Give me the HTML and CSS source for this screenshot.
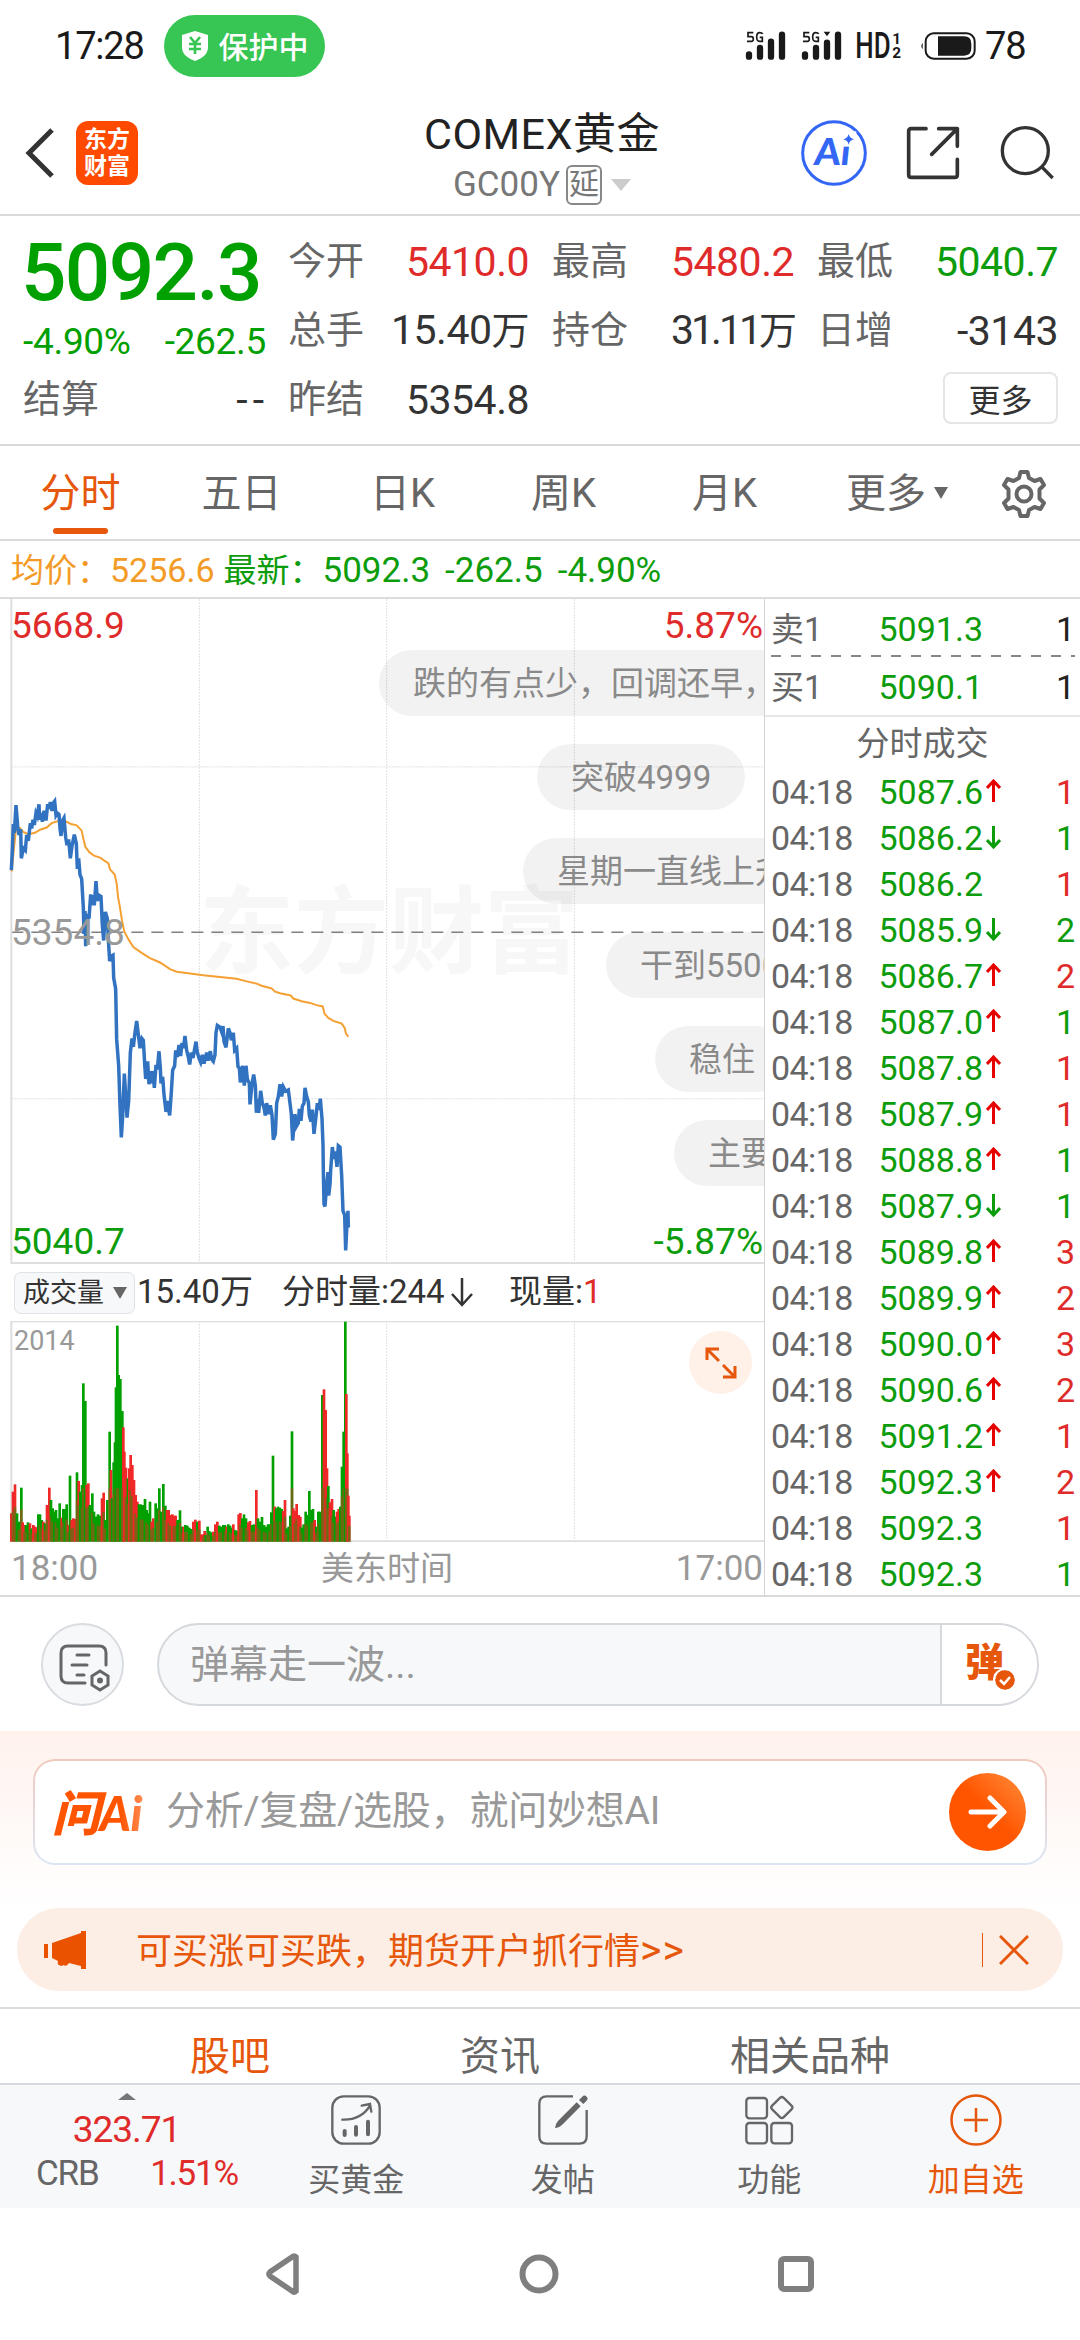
FILE: index.html
```html
<!DOCTYPE html>
<html lang="zh-CN">
<head>
  <meta charset="utf-8">
  <title>COMEX黄金</title>
  <link rel="stylesheet" href="styles.css">
</head>
<body>
  <div class="status-bar">
    <span class="clock">17:28</span>
    <span class="guard">
      <svg width="28" height="32" viewBox="0 0 28 32"><path d="M14 1l13 4v12c0 7-5 11-13 14C6 28 1 24 1 17V5z" fill="#fff"/><path d="M9 7l5 6 5-6M8 14h12M8 19h12M14 13v11" fill="none" stroke="#37c553" stroke-width="2.6"/></svg>
      <span>保护中</span>
    </span>
    <svg class="signals" width="160" height="32" viewBox="0 0 480 96">
      <g fill="none" stroke="#1a1a1a" stroke-width="19" stroke-linecap="round">
        <path d="M15 73v7M48 54v26M81 35v45M114 14v66M183 73v7M216 54v26M249 38v42M282 14v66"/>
      </g>
      <path d="M239 5h20l-10 14z" fill="#1a1a1a"/>
      <g fill="none" stroke="#1a1a1a" stroke-width="5">
        <path d="M28 8H12v12h10q6 0 6 7t-6 7H9M56 12q-2-4-9-4-9 0-9 13t9 13h8V22h-8"/>
        <path d="M196 8h-16v12h10q6 0 6 7t-6 7h-13M224 12q-2-4-9-4-9 0-9 13t9 13h8V22h-8"/>
      </g>
      <text class="hd" x="334" y="85" textLength="106" lengthAdjust="spacingAndGlyphs">HD</text>
      <text class="sub" x="445" y="42">1</text>
      <text class="sub" x="445" y="85">2</text>
    </svg>
    <svg class="battery" width="56" height="28" viewBox="0 0 168 84"><rect x="17" y="4" width="147" height="76" rx="24" fill="none" stroke="#1a1a1a" stroke-width="6"/><path d="M54 13h78q22 0 22 22v14q0 22-22 22H54zM8 32v20q-8-10 0-20z" fill="#1a1a1a"/></svg>
    <span class="percent">78</span>
  </div>

  <div class="header">
    <svg class="back" width="30" height="52" viewBox="0 0 30 52"><path d="M28 3L5 26l23 23" fill="none" stroke="#333" stroke-width="5"/></svg>
    <div class="logo"><span>东方</span><span>财富</span></div>
    <div class="title">
      <h1>COMEX黄金</h1>
      <p>GC00Y<span class="delay">延</span><i class="tri"></i></p>
    </div>
    <div class="actions">
      <svg width="66" height="66" viewBox="0 0 198 198">
        <circle cx="99" cy="99" r="94" fill="none" stroke="#3366f5" stroke-width="9"/>
        <text class="ai" x="38" y="136" transform="skewX(-6) translate(13 0)">Ai</text>
        <path d="M120 34h46v46h-46z" fill="#fff"/>
        <path d="M143 42q3 13 16 16-13 3-16 16-3-13-16-16 13-3 16-16z" fill="#3366f5"/>
      </svg>
      <svg width="54" height="54" viewBox="0 0 162 162"><g fill="none" stroke="#333" stroke-width="11" stroke-linecap="round" stroke-linejoin="round"><path d="M60 8H16q-8 0-8 8v130q0 8 8 8h130q8 0 8-8v-46M98 8h56v53M154 8L77 85"/></g></svg>
      <svg width="54" height="54" viewBox="0 0 162 162"><circle cx="76" cy="74" r="69" fill="none" stroke="#333" stroke-width="10"/><path d="M124 121l34 35" stroke="#333" stroke-width="10"/></svg>
    </div>
  </div>

  <div class="quote">
    <div class="price">
      <b>5092.3</b>
      <div class="change"><span>-4.90%</span><span>-262.5</span></div>
      <div class="cell"><label>结算</label><span class="empty">--</span></div>
    </div>
    <div class="cells">
      <div class="cell"><label>今开</label><span class="red">5410.0</span></div>
      <div class="cell"><label>最高</label><span class="red">5480.2</span></div>
      <div class="cell"><label>最低</label><span class="green">5040.7</span></div>
      <div class="cell"><label>总手</label><span>15.40<small>万</small></span></div>
      <div class="cell"><label>持仓</label><span class="tight">31.11<small>万</small></span></div>
      <div class="cell"><label>日增</label><span>-3143</span></div>
      <div class="cell"><label>昨结</label><span>5354.8</span></div>
      <div></div>
      <div class="cell"><button class="more">更多</button></div>
    </div>
  </div>

  <div class="tabs">
    <span class="active">分时</span>
    <span>五日</span>
    <span>日K</span>
    <span>周K</span>
    <span>月K</span>
    <span class="tab-more">更多<i class="tri"></i></span>
    <svg width="48" height="50" viewBox="0 0 48 50"><path d="M20.500 3h7l1.500 6 5.500 3 6-2 3.500 6-4.500 4.500v9L44 34l-3.500 6-6-2-5.500 3-1.500 6h-7L19 41l-5.500-3-6 2L4 34l4.500-4.500v-9L4 16l3.500-6 6 2L19 9z" fill="none" stroke="#666" stroke-width="4" stroke-linejoin="round"/><circle cx="24" cy="25" r="7.500" fill="none" stroke="#666" stroke-width="4"/></svg>
  </div>

  <div class="info">
    <span class="avg">均价：<em>5256.6</em></span>
    <span class="last">最新：<em>5092.3</em><em>-262.5</em><em>-4.90%</em></span>
  </div>

  <div class="market">
    <div class="charts">
      <div class="price-box">
        <div class="watermark">东方财富</div>
        <svg class="plot" viewBox="0 18 2292 1513" preserveAspectRatio="none">
          <path class="grid" d="M598 18V1531M1160 18V1531M1723 18V1531M34 400H2292M34 1155H2292"/>
          <path class="base" d="M34 776H2292"/>
          <path class="frame" d="M34 18V1529H2292"/>
          <polyline class="avg-line" points="35,638 40,600 48,540 58,538 70,548 85,553 105,550 120,543 140,538 155,528 175,523 200,525 213,530 230,533 245,545 250,563 256,582 268,594 282,602 302,607 314,614 325,619 330,633 344,645 350,665 354,695 360,720 366,750 373,775 386,793 400,810 425,823 450,835 480,845 510,860 530,866 570,870 610,874 660,878 710,882 740,888 770,893 785,898 815,904 824,911 840,915 872,920 880,927 905,933 930,937 950,942 968,945 974,962 985,971 1000,978 1025,984 1034,994 1038,1007 1045,1014"/>
          <polyline class="price-line" points="34,635 37,590 40,530 43,550 48,487 50,505 53,535 57,555 62,542 64,608 70,585 76,590 80,555 85,568 91,528 95,540 99,520 103,532 108,505 112,512 117,485 119,520 124,505 127,525 132,500 138,522 143,485 147,495 151,480 156,500 160,482 164,478 168,510 172,505 177,508 180,540 183,557 189,520 192,516 197,560 201,578 206,565 211,608 216,580 223,554 229,575 232,632 236,608 240,645 245,655 250,720 252,780 255,728 257,808 262,735 267,745 272,690 276,715 280,692 283,715 288,660 292,705 297,692 303,695 307,760 311,795 316,730 322,745 326,805 329,842 334,830 339,828 341,880 347,905 350,1020 356,1080 360,1170 364,1243 368,1195 373,1098 378,1160 381,1198 386,1160 391,1050 396,1018 400,1037 405,1005 410,978 416,1015 420,1040 426,1018 430,1022 434,1075 437,1110 443,1070 447,1122 452,1092 455,1120 459,1092 463,1130 468,1078 472,1088 477,1047 481,1085 483,1120 488,1105 492,1145 498,1185 502,1160 509,1193 514,1140 518,1090 524,1080 527,1045 532,1060 537,1033 542,1058 546,1028 550,1040 555,1012 560,1045 565,1060 569,1077 574,1050 579,1062 588,1025 592,1050 598,1065 602,1072 607,1055 612,1075 620,1050 624,1068 631,1047 635,1065 640,1070 645,1055 648,1005 652,988 660,992 665,1003 669,990 672,1025 678,1038 685,995 690,1005 694,1022 700,1005 704,1045 710,1040 714,1082 718,1085 721,1118 728,1080 733,1125 738,1080 742,1110 748,1120 750,1168 756,1122 761,1100 766,1125 769,1187 774,1155 776,1187 782,1137 787,1165 792,1175 796,1193 800,1165 807,1190 811,1170 816,1192 820,1248 826,1235 830,1165 835,1150 840,1122 845,1150 850,1128 857,1138 865,1135 870,1165 874,1190 878,1250 885,1190 889,1218 895,1210 898,1178 903,1205 907,1172 912,1165 915,1130 920,1150 925,1162 928,1193 933,1207 937,1180 942,1235 948,1195 952,1165 957,1180 961,1155 966,1200 969,1260 970,1320 972,1395 975,1400 980,1350 984,1322 986,1375 990,1350 992,1318 997,1265 1002,1292 1006,1275 1011,1310 1015,1262 1020,1265 1025,1330 1029,1410 1034,1420 1037,1500 1041,1440 1044,1410 1045,1448"/>
        </svg>
        <span class="mark top-left red">5668.9</span>
        <span class="mark top-right red">5.87%</span>
        <span class="mark middle">5354.8</span>
        <span class="mark bottom-left green">5040.7</span>
        <span class="mark bottom-right green">-5.87%</span>
        <div class="danmu">
          <span class="d1">跌的有点少，回调还早，</span>
          <span class="d2">突破4999</span>
          <span class="d3">星期一直线上升</span>
          <span class="d4">干到5500</span>
          <span class="d5">稳住</span>
          <span class="d6">主要</span>
        </div>
      </div>
      <div class="volume-head">
        <span class="picker">成交量<i class="tri"></i></span>
        <span class="total">15.40万</span>
        <span class="minute">分时量:244<svg width="24" height="32" viewBox="0 0 24 32"><path d="M12 2v27M2 18l10 11 10-11" fill="none" stroke="#333" stroke-width="2.500"/></svg></span>
        <span>现量:<span class="red">1</span></span>
      </div>
      <div class="volume-box">
        <svg class="plot" viewBox="0 183 2292 663" preserveAspectRatio="none">
          <path class="grid" d="M598 183V845M1160 183V845M1723 183V845"/>
          <path class="frame" d="M2292 184H34V844H2292"/>
          <g id="bars"></g>
        </svg>
        <span class="max">2014</span>
        <span class="expand"><svg width="36" height="36" viewBox="0 0 36 36"><path d="M4 15V4h12M4 4l12 12M32 21v11H20M32 32L20 20" fill="none" stroke="#e6570c" stroke-width="3"/></svg></span>
      </div>
      <div class="axis"><span>18:00</span><span>美东时间</span><span>17:00</span></div>
    </div>

    <div class="trades">
      <div class="level"><span>卖1</span><span class="green">5091.3</span><b>1</b></div>
      <div class="level"><span>买1</span><span class="green">5090.1</span><b>1</b></div>
      <div class="trades-title">分时成交</div>
      <div id="deals"></div>
    </div>
  </div>

  <div class="send">
    <div class="round"><svg width="52" height="50" viewBox="0 0 52 50"><g fill="none" stroke="#666" stroke-width="3" stroke-linecap="round"><path d="M47 22V10q0-7-7-7H9q-7 0-7 7v23q0 7 7 7h17M18 12h12M13 22h15M18 32h7"/><path d="M41 28l8 5v9l-8 5-8-5v-9z"/></g><circle cx="41" cy="37.500" r="3" fill="#666"/></svg></div>
    <div class="field">
      <span>弹幕走一波...</span>
      <div class="toggle">弹<svg width="20" height="20" viewBox="0 0 20 20"><circle cx="10" cy="10" r="10" fill="#e6570c"/><path d="M5 10l4 4 6-7" fill="none" stroke="#fff" stroke-width="2.500"/></svg></div>
    </div>
  </div>

  <div class="ask">
    <div class="ask-box">
      <span class="ask-logo">问Ai</span>
      <span class="ask-hint">分析/复盘/选股，就问妙想AI</span>
      <span class="go"><svg width="40" height="34" viewBox="0 0 40 34"><path d="M3 17h33M22 3l14 14-14 14" fill="none" stroke="#fff" stroke-width="5" stroke-linecap="round" stroke-linejoin="round"/></svg></span>
    </div>
  </div>

  <div class="notice">
    <svg width="43" height="38" viewBox="0 0 43 38"><path d="M0 13h4v14H0zM8 12L37 2V0h5v38h-5v-3l-12-3q-2 4-6 2-1 2-4 0-2-1-1-4l-6-3z" fill="#eb5200"/></svg>
    <span>可买涨可买跌，期货开户抓行情<em>&gt;&gt;</em></span>
    <i class="bar"></i>
    <svg width="30" height="30" viewBox="0 0 30 30"><path d="M1 1l28 28M29 1L1 29" stroke="#e6570c" stroke-width="3"/></svg>
  </div>

  <div class="sections">
    <span class="active">股吧</span>
    <span>资讯</span>
    <span>相关品种</span>
  </div>

  <div class="toolbar">
    <div class="index">
      <i class="up"></i>
      <strong>323.71</strong>
      <p><span>CRB</span><span class="red">1.51%</span></p>
    </div>
    <div class="tool">
      <svg width="50" height="50" viewBox="0 0 150 150"><g fill="none" stroke="#666" stroke-width="7"><rect x="4" y="4" width="142" height="142" rx="34"/><path d="M34 74q56 2 83-42M92 32l25-5 4 23" stroke-linecap="round"/></g><path d="M41 108v12M75 96v23M111 80v38" stroke="#666" stroke-width="12" stroke-linecap="round"/></svg>
      <span>买黄金</span>
    </div>
    <div class="tool">
      <svg width="50" height="50" viewBox="0 0 150 150"><path d="M105 4H26Q4 4 4 26v98q0 22 22 22h98q22 0 22-22V45" fill="none" stroke="#666" stroke-width="7"/><path d="M51 100q0-12 9-22l56-56 12 12-56 56q-9 9-21 10zM123 15l9-9q7-8 14-1 6 6-1 13l-9 9z" fill="#666"/></svg>
      <span>发帖</span>
    </div>
    <div class="tool">
      <svg width="50" height="50" viewBox="0 0 150 150"><g fill="none" stroke="#666" stroke-width="7"><rect x="7" y="9" width="62" height="61" rx="9"/><rect x="7" y="84" width="62" height="61" rx="9"/><rect x="82" y="84" width="62" height="61" rx="9"/><rect x="89" y="13" width="49" height="49" rx="8" transform="rotate(45 113.500 37.500)"/></g></svg>
      <span>功能</span>
    </div>
    <div class="tool add">
      <svg width="52" height="52" viewBox="0 0 52 52"><circle cx="26" cy="26" r="24.500" fill="none" stroke="#e6570c" stroke-width="2.500"/><path d="M26 14v24M14 26h24" stroke="#e6570c" stroke-width="2.500"/></svg>
      <span>加自选</span>
    </div>
  </div>

  <div class="navbar">
    <svg width="36" height="42" viewBox="0 0 36 42"><path d="M31 4v34q-2 2-4 0L5 23q-2-2 0-4L27 4q2-2 4 0z" fill="none" stroke="#7f7f7f" stroke-width="5.500"/></svg>
    <svg width="40" height="40" viewBox="0 0 40 40"><circle cx="20" cy="20" r="16.500" fill="none" stroke="#7f7f7f" stroke-width="6"/></svg>
    <svg width="38" height="38" viewBox="0 0 38 38"><rect x="4" y="4" width="30" height="30" rx="3" fill="none" stroke="#7f7f7f" stroke-width="6"/></svg>
  </div>

  <script src="chart.js"></script>
</body>
</html>
```
FILE: styles.css
```css
* {
  box-sizing: border-box;
}
body {
  width: 1080px;
  height: 2340px;
  margin: 0;
  overflow: hidden;
  font-family: Roboto, "Noto Sans CJK SC", sans-serif;
  background: #fff;
  color: #333;
}
svg {
  display: block;
  flex: none;
}
h1, p {
  margin: 0;
  font-weight: 400;
}
i, em {
  font-style: normal;
}
.red {
  color: #e02b2b !important;
}
.green {
  color: #0c9c0c !important;
}
.tri {
  display: inline-block;
  border: 7px solid transparent;
  border-top: 12px solid #666;
  border-bottom: 0;
}

/* status bar */
.status-bar {
  height: 92px;
  display: flex;
  align-items: center;
  padding-left: 55px;
  color: #1a1a1a;
  font-size: 38px;
}
.clock {
  width: 109px;
  letter-spacing: -1.200px;
}
.guard {
  width: 161px;
  height: 62px;
  border-radius: 31px;
  background: #37c553;
  color: #fff;
  font-size: 30px;
  font-weight: 500;
  display: flex;
  align-items: center;
  justify-content: center;
  gap: 10px;
  white-space: nowrap;
}
.guard span {
  margin-top: -3px;
}
.signals {
  margin-left: 419px;
}
.signals text {
  fill: #1a1a1a;
  font-weight: 500;
}
.signals .hd {
  font-size: 108px;
}
.signals .sub {
  font-size: 46px;
  font-weight: 700;
}
.battery {
  margin: 0 9px 0 16px;
}
.percent {
  letter-spacing: -1px;
}

/* header */
.header {
  height: 124px;
  display: flex;
  align-items: center;
  padding: 0 26px 0 24px;
  border-bottom: 2px solid #d9d9d9;
}
.logo {
  width: 62px;
  height: 64px;
  margin-left: 22px;
  border-radius: 12px;
  background: #ff4a00;
  color: #fff;
  font-size: 23px;
  font-weight: 700;
  line-height: 27px;
  display: flex;
  flex-direction: column;
  align-items: center;
  justify-content: center;
}
.title {
  flex: 1;
  margin: 12px 120px 0 265px;
  text-align: center;
  white-space: nowrap;
}
.title h1 {
  margin: 0 -20px;
  font-size: 43px;
  line-height: 52px;
  letter-spacing: .5px;
  color: #222;
}
.title p {
  display: flex;
  align-items: center;
  justify-content: center;
  font-size: 35px;
  line-height: 50px;
  color: #777;
}
.delay {
  border: 2px solid #888;
  border-radius: 6px;
  font-size: 30px;
  line-height: 34px;
  margin: 0 9px 0 6px;
  padding: 0 1px 2px;
}
.title .tri {
  border-width: 12px 10px 0;
  border-top-color: #ccc;
}
.actions {
  display: flex;
  align-items: center;
  gap: 40px;
}
.actions svg:first-child {
  margin-right: -1px;
}
.ai {
  font: 900 112px Lato, Roboto, sans-serif;
  fill: #3366f5;
}

/* quote */
.quote {
  height: 230px;
  display: flex;
  padding: 11px 20px 0 23px;
  border-bottom: 2px solid #d9d9d9;
}
.price {
  width: 243px;
  margin-right: 22px;
  color: #00a000;
}
.price b {
  display: block;
  margin-left: -2px;
  font-size: 80px;
  font-weight: 500;
  line-height: 92px;
  letter-spacing: -1.600px;
}
.change {
  display: flex;
  justify-content: space-between;
  font-size: 37px;
  line-height: 46px;
  letter-spacing: -.3px;
}
.cells {
  flex: 1;
  display: grid;
  grid-template-columns: 241px 242px 241px;
  grid-auto-rows: 69px;
  column-gap: 23px;
}
.cell {
  display: flex;
  justify-content: space-between;
  align-items: center;
  height: 69px;
  font-size: 41px;
  letter-spacing: -.5px;
  color: #333;
}
.cell label {
  font-size: 38px;
  line-height: 56px;
  letter-spacing: 0;
  margin-top: -2px;
  color: #666;
}
.cell span {
  line-height: 56px;
}
.cell small {
  font-size: 38px;
}
.cell .tight {
  letter-spacing: -3px;
}
.cell .empty {
  letter-spacing: 5px;
  margin-right: -3px;
}
.more {
  width: 115px;
  height: 52px;
  margin: -4px 0 0 auto;
  border: 2px solid #e5e5e5;
  border-radius: 8px;
  background: #fff;
  font: 32px "Noto Sans CJK SC", sans-serif;
  line-height: 46px;
  padding: 0;
  color: #333;
}

/* period tabs */
.tabs {
  height: 95px;
  display: grid;
  grid-template-columns: repeat(5, 161px) 184px 1fr;
  align-items: center;
  border-bottom: 2px solid #d9d9d9;
  font-size: 40px;
  color: #666;
  text-align: center;
}
.tabs span {
  line-height: 96px;
}
.tabs .active {
  color: #e6570c;
  position: relative;
}
.tabs .active::after {
  content: "";
  position: absolute;
  left: 53px;
  bottom: 8px;
  width: 55px;
  height: 6px;
  border-radius: 3px;
  background: #e6570c;
}
.tab-more .tri {
  margin: 0 0 8px 8px;
}
.tabs svg {
  margin-left: 11px;
}

/* average / last */
.info {
  height: 58px;
  padding-left: 11px;
  border-bottom: 2px solid #dcdcdc;
  font-size: 33px;
  line-height: 59px;
  display: flex;
  gap: 9px;
}
.info em {
  font-size: 35px;
  margin-right: 15px;
}
.avg {
  color: #f39b26;
}
.info .avg em {
  margin-right: 0;
  font-size: 34px;
}
.last {
  color: #0c9c0c;
}

/* charts */
.market {
  height: 998px;
  display: flex;
  border-bottom: 2px solid #d9d9d9;
}
.charts {
  width: 765px;
  border-right: 1px solid #d4d4d4;
}
.price-box, .volume-box {
  position: relative;
  overflow: hidden;
}
.price-box {
  height: 665px;
}
.plot {
  width: 764px;
  height: 100%;
  position: relative;
}
.plot path, .plot polyline {
  fill: none;
  vector-effect: non-scaling-stroke;
}
.grid {
  stroke: #e0e0e0;
  stroke-dasharray: 2 1;
}
.frame {
  stroke: #dedede;
  stroke-width: 2;
}
.base {
  stroke: #808080;
  stroke-width: 1.500;
  stroke-dasharray: 12 8;
}
.avg-line {
  stroke: #f5a033;
  stroke-width: 2;
}
.price-line {
  stroke: #3173c1;
  stroke-width: 3.500;
}
.watermark {
  position: absolute;
  left: 199px;
  top: 265px;
  font-size: 95px;
  line-height: 140px;
  font-weight: 700;
  color: #f7f7f7;
}
.mark {
  position: absolute;
  font-size: 37px;
  line-height: 40px;
}
.top-left { left: 11px; top: 7px; }
.top-right { right: 1px; top: 7px; }
.middle { left: 11px; top: 314px; color: #999; }
.bottom-left { left: 11px; bottom: 2px; }
.bottom-right { right: 1px; bottom: 2px; }
.danmu {
  position: absolute;
  left: 0;
  right: 0;
  top: 51px;
  display: flex;
  flex-direction: column;
  align-items: flex-start;
  gap: 28px;
}
.danmu span {
  height: 66px;
  border-radius: 33px;
  padding: 0 34px;
  background: rgba(0, 0, 0, .05);
  color: #8a8a8a;
  font-size: 33px;
  line-height: 68px;
  white-space: nowrap;
}
.d1 { margin-left: 379px; }
.d2 { margin-left: 537px; }
.d3 { margin-left: 523px; }
.d4 { margin-left: 606px; }
.d5 { margin-left: 655px; }
.d6 { margin-left: 674px; }

.volume-head {
  height: 57px;
  display: flex;
  align-items: center;
  padding-left: 14px;
  font-size: 33px;
  line-height: 54px;
}
.volume-head > span {
  margin-top: -2px;
}
.volume-head svg {
  display: inline-block;
  margin-left: 5px;
  vertical-align: -5px;
}
.volume-head .picker {
  width: 121px;
  height: 42px;
  border: 1px solid #dfe2e6;
  border-radius: 7px;
  background: #f7f8fa;
  font-size: 27px;
  line-height: 40px;
  padding-left: 8px;
  margin: 0 2px 0 0;
  white-space: nowrap;
}
.picker .tri {
  margin: 0 0 3px 9px;
}
.total {
  width: 145px;
}
.minute {
  width: 227px;
}
.volume-box {
  height: 221px;
}
.max {
  position: absolute;
  left: 14px;
  top: 4px;
  color: #999;
  font-size: 27px;
}
.expand {
  position: absolute;
  right: 12px;
  top: 10px;
  width: 63px;
  height: 63px;
  border-radius: 50%;
  background: #fff0e8;
  display: flex;
  align-items: center;
  justify-content: center;
}
.axis {
  height: 53px;
  display: flex;
  justify-content: space-between;
  padding: 0 1px 0 11px;
  font-size: 35px;
  line-height: 54px;
  color: #999;
}
.axis span:nth-child(2) {
  font-size: 33px;
}

/* trades */
.trades {
  flex: 1;
}
.level, .deal {
  display: grid;
  grid-template-columns: 86px 126px 20px 1fr;
  padding: 0 5px 0 6px;
  font-size: 34px;
  color: #666;
}
.level {
  height: 58px;
  line-height: 61px;
}
.level:first-child {
  background: repeating-linear-gradient(90deg, #888 0 10px, transparent 10px 20px) 6px 100% / 304px 2px no-repeat;
}
.level span:first-child {
  font-size: 33px;
}
.level .green {
  text-align: right;
}
.level b {
  grid-column: 4;
  font-weight: 400;
  text-align: right;
  color: #222;
}
.trades-title {
  height: 54px;
  border-top: 2px solid #e8e8e8;
  font-size: 33px;
  line-height: 54px;
  text-align: center;
  color: #666;
}
.deal {
  height: 46px;
  line-height: 46px;
}
.deal span:first-child {
  letter-spacing: -.6px;
}
.deal .cost {
  text-align: right;
}
.deal svg {
  margin: 10px 0 0 3px;
}
.deal .qty {
  text-align: right;
}

/* danmu input */
.send {
  height: 134px;
  padding: 26px 41px 0 41px;
  display: flex;
  justify-content: space-between;
}
.round {
  width: 83px;
  height: 83px;
  border: 2px solid #d9dce0;
  border-radius: 50%;
  background: #f7f8fa;
  padding: 18px 0 0 16px;
}
.field {
  width: 882px;
  height: 83px;
  border: 2px solid #d5d8dc;
  border-radius: 42px;
  background: #f7f8fa;
  overflow: hidden;
  display: flex;
  justify-content: space-between;
  padding-left: 31px;
  font-size: 39px;
  line-height: 80px;
  color: #999;
}
.toggle {
  width: 97px;
  border-left: 2px solid #d5d8dc;
  background: #fff;
  padding-left: 23px;
  color: #e6570c;
  font-weight: 900;
  line-height: 76px;
  position: relative;
}
.toggle svg {
  position: absolute;
  left: 53px;
  top: 45px;
  border-radius: 50%;
  box-shadow: 0 0 0 2px #fff;
}

/* ask box */
.ask {
  height: 177px;
  padding: 28px 33px 0;
  background: linear-gradient(#fff2ed, #fff);
}
.ask-box {
  height: 106px;
  border: 2px solid transparent;
  border-radius: 22px;
  background: linear-gradient(#fff, #fff) padding-box, linear-gradient(#f2c9be, #dbe5f5) border-box;
  display: flex;
  align-items: center;
  padding: 0 19px 0 17px;
}
.ask-logo {
  width: 114px;
  margin-top: -4px;
  font: italic 900 48px Lato, "Noto Sans CJK SC", sans-serif;
  letter-spacing: -.5px;
  background: linear-gradient(90deg, #ff5500 60%, #ff9a66 85%);
  -webkit-background-clip: text;
  color: transparent;
}
.ask-hint {
  flex: 1;
  font-size: 39px;
  letter-spacing: -.2px;
  line-height: 56px;
  margin-top: -2px;
  color: #999;
}
.go {
  width: 77px;
  height: 78px;
  border-radius: 50%;
  background: linear-gradient(45deg, #ff5500 50%, #ff8e3c);
  display: flex;
  align-items: center;
  justify-content: center;
}

/* notice */
.notice {
  height: 83px;
  margin: 0 17px;
  border-radius: 42px;
  background: #fceee5;
  color: #e6570c;
  display: flex;
  align-items: center;
  padding: 0 34px 0 27px;
  font-size: 36px;
}
.notice span {
  flex: 1;
  margin: -3px 0 0 49px;
}
.notice em {
  font-size: 41px;
  letter-spacing: 1px;
}
.bar {
  width: 1px;
  height: 34px;
  margin-right: 16px;
  background: #e6570c;
}

.sections {
  height: 76px;
  margin-top: 16px;
  border-top: 2px solid #d9dbdd;
  display: flex;
  justify-content: space-evenly;
  font-size: 40px;
  line-height: 95px;
  color: #666;
}
.sections .active {
  color: #e6570c;
}

/* bottom toolbar */
.toolbar {
  height: 125px;
  border-top: 2px solid #d5d8dc;
  background: #f7f8fa;
  display: grid;
  grid-template-columns: 253px repeat(4, 206.500px);
  position: relative;
}
.index {
  display: flex;
  flex-direction: column;
  align-items: center;
  padding-top: 8px;
}
.up {
  border: 9px solid transparent;
  border-bottom: 7px solid #777;
  border-top: 0;
}
.index strong {
  font-size: 37px;
  font-weight: 400;
  line-height: 44px;
  margin-top: 8px;
  color: #e02b2b;
  letter-spacing: -1px;
}
.index p {
  width: 202px;
  margin-left: 21px;
  display: flex;
  justify-content: space-between;
  font-size: 35px;
  line-height: 44px;
  color: #666;
  letter-spacing: -1.200px;
}
.tool {
  display: flex;
  flex-direction: column;
  align-items: center;
  padding-top: 9px;
  font-size: 32px;
  line-height: 46px;
  color: #666;
}
.tool svg {
  height: 52px;
  margin-bottom: 11px;
}
.add {
  color: #e6570c;
}

.navbar {
  height: 132px;
  display: flex;
  align-items: center;
  justify-content: center;
  gap: 218px;
}
```
FILE: chart.js
```javascript
// x, direction and height for every volume bar
var volume = '34r85 39r150 45r172 51g85 57g60 64g162 68r58 73r50 78g50 84g58 90r55 95g40 100r50 106r45 111r42 115g82 120g82 125g65 130r60 135g55 141r110 148r162 153g125 158g100 163g90 168g95 173g70 179g115 185r72 190g98 195g98 200g112 205r50 210g198 215r65 220r70 226r68 231g208 236r182 241g150 246g170 250g475 256g422 260r170 265r175 270g110 277g145 282g90 288g75 294g82 300g78 306r130 311r147 316g65 322g125 329g330 333r215 337g130 341g238 345g298 348g463 352g648 356g500 361g488 367g392 370r343 373r270 378r222 384g190 388r220 392r260 397r230 402r185 407r140 412r120 417g112 422g112 428g110 435g128 440g95 445g85 450g120 455r60 460r70 467g115 472g100 478g160 484g90 490g173 496g108 501r95 506r95 511r80 517r82 522r78 527r78 533g65 540g94 546g45 551r45 556g50 562g48 568g42 573g38 580r60 586r66 592g60 598r63 604r22 610r22 614r32 618g20 623g45 628g32 634g28 640r30 646r52 652r60 658g48 664g45 670g50 675g50 680r45 685g52 690g48 695g42 700r52 706g35 711g32 716r82 721r86 727g70 732g82 738g70 745r58 750r62 756g50 762g52 769r155 774g70 780g60 786g74 792g50 798g45 804g52 809g52 814g88 819g258 824r105 829g100 834g105 840g102 845g98 850r92 855r125 860g40 866g45 871g78 876g331 880r100 885r92 890r113 896r80 901r75 906g42 911g52 917g90 923g80 928g152 934g95 939g98 944r65 949g45 955g90 960g90 967g440 972r457 977r395 981r220 985g167 990r118 996r128 1001g95 1006g75 1011r90 1016r98 1021g105 1026g225 1031g330 1036g660 1039r443 1042r265 1045r138 1048r78';

var colors = { r: '#f02828', g: '#00a000' };

function bar(x, h, color, opacity) {
  return '<rect x="' + (x - 4) + '" y="' + (845 - h) + '" width="8" height="' + h +
    '" fill="' + color + '" opacity="' + opacity + '"/>';
}

var html = '';
volume.split(' ').forEach(function (item, i) {
  var m = item.match(/(\d+)([rg])(\d+)/);
  var x = +m[1], h = +m[3];
  html += bar(x, h, colors[m[2]], 1);
  if (i % 3) {
    html += bar(x, Math.min(h * 0.6, 160), m[2] === 'r' ? colors.g : colors.r, 0.45);
  }
});
document.getElementById('bars').innerHTML = html;

// price, arrow, quantity, quantity colour
var deals = [
  ['5087.6', 'up', 1, 'red'],
  ['5086.2', 'down', 1, 'green'],
  ['5086.2', '', 1, 'red'],
  ['5085.9', 'down', 2, 'green'],
  ['5086.7', 'up', 2, 'red'],
  ['5087.0', 'up', 1, 'green'],
  ['5087.8', 'up', 1, 'red'],
  ['5087.9', 'up', 1, 'red'],
  ['5088.8', 'up', 1, 'green'],
  ['5087.9', 'down', 1, 'green'],
  ['5089.8', 'up', 3, 'red'],
  ['5089.9', 'up', 2, 'red'],
  ['5090.0', 'up', 3, 'red'],
  ['5090.6', 'up', 2, 'red'],
  ['5091.2', 'up', 1, 'red'],
  ['5092.3', 'up', 2, 'red'],
  ['5092.3', '', 1, 'red'],
  ['5092.3', '', 1, 'green']
];
var arrows = {
  up: '<path d="M7.500 23V2M1 9l6.500-7L14 9" fill="none" stroke="#e60000" stroke-width="3"/>',
  down: '<path d="M7.500 1v21M1 15l6.500 7 6.500-7" fill="none" stroke="#0c9c0c" stroke-width="3"/>',
  '': ''
};
document.getElementById('deals').innerHTML = deals.map(function (d) {
  return '<div class="deal"><span>04:18</span><span class="cost green">' + d[0] + '</span>' +
    '<svg width="15" height="24" viewBox="0 0 15 24">' + arrows[d[1]] + '</svg>' +
    '<span class="qty ' + d[3] + '">' + d[2] + '</span></div>';
}).join('');
```
